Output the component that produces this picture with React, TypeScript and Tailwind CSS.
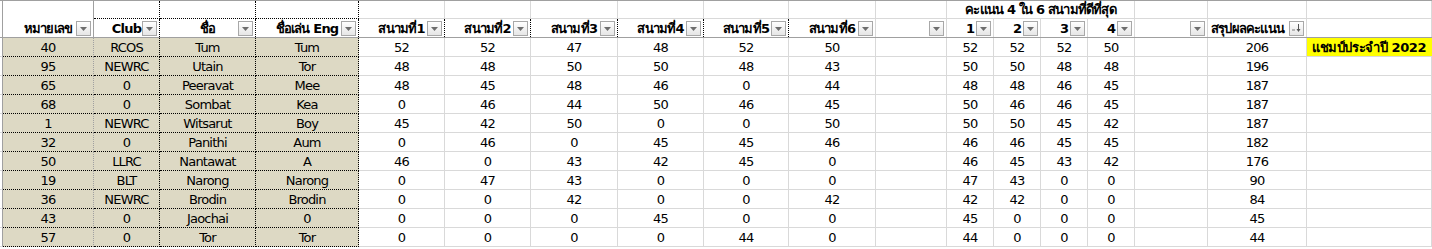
import type { ReactNode } from 'react'

type Row = {
  no: string
  club: string
  name: string
  nick: string
  fields: number[]
  best: number[]
  total: number
  note?: string
}

const rows: Row[] = [
  { no: '40', club: 'RCOS', name: 'Tum', nick: 'Tum', fields: [52, 52, 47, 48, 52, 50], best: [52, 52, 52, 50], total: 206, note: 'แชมป์ประจำปี 2022' },
  { no: '95', club: 'NEWRC', name: 'Utain', nick: 'Tor', fields: [48, 48, 50, 50, 48, 43], best: [50, 50, 48, 48], total: 196 },
  { no: '65', club: '0', name: 'Peeravat', nick: 'Mee', fields: [48, 45, 48, 46, 0, 44], best: [48, 48, 46, 45], total: 187 },
  { no: '68', club: '0', name: 'Sombat', nick: 'Kea', fields: [0, 46, 44, 50, 46, 45], best: [50, 46, 46, 45], total: 187 },
  { no: '1', club: 'NEWRC', name: 'Witsarut', nick: 'Boy', fields: [45, 42, 50, 0, 0, 50], best: [50, 50, 45, 42], total: 187 },
  { no: '32', club: '0', name: 'Panithi', nick: 'Aum', fields: [0, 46, 0, 45, 45, 46], best: [46, 46, 45, 45], total: 182 },
  { no: '50', club: 'LLRC', name: 'Nantawat', nick: 'A', fields: [46, 0, 43, 42, 45, 0], best: [46, 45, 43, 42], total: 176 },
  { no: '19', club: 'BLT', name: 'Narong', nick: 'Narong', fields: [0, 47, 43, 0, 0, 0], best: [47, 43, 0, 0], total: 90 },
  { no: '36', club: 'NEWRC', name: 'Brodin', nick: 'Brodin', fields: [0, 0, 42, 0, 0, 42], best: [42, 42, 0, 0], total: 84 },
  { no: '43', club: '0', name: 'Jaochai', nick: '0', fields: [0, 0, 0, 45, 0, 0], best: [45, 0, 0, 0], total: 45 },
  { no: '57', club: '0', name: 'Tor', nick: 'Tor', fields: [0, 0, 0, 0, 44, 0], best: [44, 0, 0, 0], total: 44 },
]

// column widths include the 1px right border
const fieldW = ['w-[86px]', 'w-[86px]', 'w-[87px]', 'w-[86px]', 'w-[85px]', 'w-[87px]']
const grid = 'border-r border-b border-[#d9d9d9]'
const dotted = 'border-r border-b border-dotted border-black'

function FilterButton({ sorted = false }: { sorted?: boolean }): JSX.Element {
  return (
    <span className="absolute right-[2px] top-[2px] flex h-[15px] w-[15px] items-center justify-center border border-[#a8a8a8] bg-gradient-to-b from-white to-[#e6e6e6]">
      {sorted ? (
        <svg width="11" height="9" viewBox="0 0 11 9">
          <path d="M1 6h3" stroke="#7a7a7a" strokeWidth="1" />
          <path d="M7.5 0v7" stroke="#555" strokeWidth="1" />
          <path d="M5.5 5l2 3 2-3z" fill="#555" />
        </svg>
      ) : (
        <svg width="7" height="4" viewBox="0 0 7 4">
          <path d="M0 0h7L3.5 4z" fill="#6d6d6d" />
        </svg>
      )}
    </span>
  )
}

function Cell({ className, children }: { className: string; children?: ReactNode }): JSX.Element {
  return (
    <div className={`relative flex h-full shrink-0 items-center justify-center whitespace-nowrap ${className}`}>
      {children}
    </div>
  )
}

function HeadCell({ className, label, sorted }: { className: string; label?: string; sorted?: boolean }): JSX.Element {
  return (
    <Cell className={`font-bold ${className}`}>
      {label}
      <FilterButton sorted={sorted} />
    </Cell>
  )
}

export default function App(): JSX.Element {
  return (
    <div className="h-[249px] w-[1432px] overflow-hidden bg-white font-['DejaVu_Sans',sans-serif] text-[13px] leading-none tracking-[-0.8px] text-black">
      <div className="h-px bg-[#a0a0a0]" />

      {/* header row 1 */}
      <div className="flex h-[18px]">
        <Cell className="w-[3px] border-r border-[#a0a0a0]" />
        <Cell className="w-[91px] border-r border-[#a0a0a0]" />
        <Cell className={`w-[66px] ${dotted}`} />
        <Cell className={`w-[96px] ${dotted}`} />
        <Cell className={`w-[103px] ${dotted}`} />
        {fieldW.map((w, i) => (
          <Cell key={i} className={`${w} ${grid}`} />
        ))}
        <Cell className={`w-[71px] ${grid}`} />
        <Cell className={`w-[188px] font-bold ${grid}`}>คะแนน 4 ใน 6 สนามที่ดีที่สุด</Cell>
        <Cell className={`w-[73px] ${grid}`} />
        <Cell className={`w-[99px] ${grid}`} />
        <Cell className={`w-[125px] ${grid}`} />
      </div>

      {/* header row 2 */}
      <div className="flex h-[19px] border-b border-[#a0a0a0]">
        <Cell className="w-[3px] border-r border-[#a0a0a0]" />
        <HeadCell className="w-[91px] border-r border-[#a0a0a0]" label="หมายเลข" />
        <HeadCell className="w-[66px] border-r border-dotted border-black" label="Club" />
        <HeadCell className="w-[96px] border-r border-dotted border-black" label="ชื่อ" />
        <HeadCell className="w-[103px] border-r border-dotted border-black" label="ชื่อเล่น Eng" />
        {fieldW.map((w, i) => (
          <HeadCell
            key={i}
            className={`${w} border-r ${i < 5 ? 'border-dotted border-black' : 'border-[#d9d9d9]'}`}
            label={`สนามที่${i + 1}`}
          />
        ))}
        <HeadCell className="w-[71px] border-r border-[#d9d9d9]" />
        {[1, 2, 3, 4].map((n) => (
          <HeadCell key={n} className="w-[47px] border-r border-[#d9d9d9]" label={String(n)} />
        ))}
        <HeadCell className="w-[73px] border-r border-[#d9d9d9]" />
        <Cell className="w-[99px] justify-start border-r border-[#d9d9d9] pl-[3px] font-bold">
          สรุปผลคะแนน
          <FilterButton sorted />
        </Cell>
        <Cell className="w-[125px] border-r border-[#d9d9d9]" />
      </div>

      {/* data */}
      {rows.map((r) => (
        <div key={r.no} className="flex h-[19px]">
          <Cell className="w-[3px] border-r border-b border-r-[#a0a0a0] border-b-[#d9d9d9]" />
          <Cell className="w-[91px] border-r border-b border-dotted border-r-solid border-r-[#a0a0a0] border-b-black bg-[#ddd9c4]">
            {r.no}
          </Cell>
          <Cell className={`w-[66px] bg-[#ddd9c4] ${dotted}`}>{r.club}</Cell>
          <Cell className={`w-[96px] bg-[#ddd9c4] ${dotted}`}>{r.name}</Cell>
          <Cell className={`w-[103px] bg-[#ddd9c4] ${dotted}`}>{r.nick}</Cell>
          {r.fields.map((v, i) => (
            <Cell key={i} className={`${fieldW[i]} ${grid}`}>
              {v}
            </Cell>
          ))}
          <Cell className={`w-[71px] ${grid}`} />
          {r.best.map((v, i) => (
            <Cell key={i} className={`w-[47px] ${grid}`}>
              {v}
            </Cell>
          ))}
          <Cell className={`w-[73px] ${grid}`} />
          <Cell className={`w-[99px] ${grid}`}>{r.total}</Cell>
          {r.note ? (
            <Cell className="w-[125px] justify-start border-b border-[#d9d9d9] bg-[#ffff00] pl-[5px] font-bold tracking-[-0.4px]">
              {r.note}
            </Cell>
          ) : (
            <Cell className={`w-[125px] ${grid}`} />
          )}
        </div>
      ))}
    </div>
  )
}
